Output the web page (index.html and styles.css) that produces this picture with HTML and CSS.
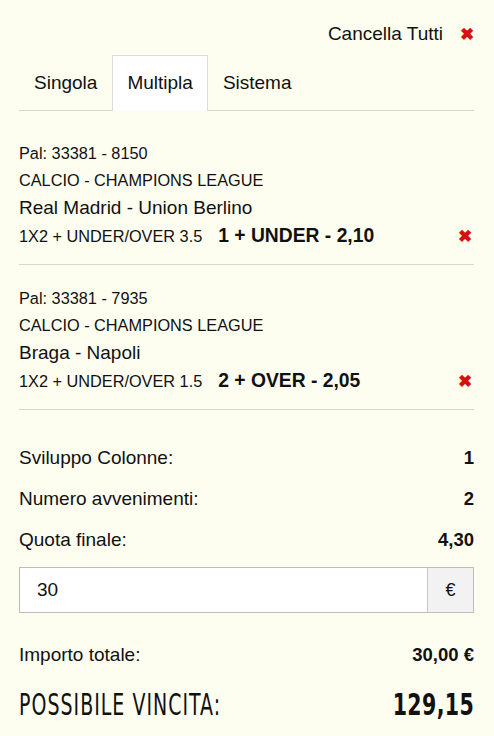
FILE: index.html
```html
<!DOCTYPE html>
<html lang="it">
<head>
    <meta charset="UTF-8">
    <meta name="viewport" content="width=device-width, initial-scale=1.0">
    <title>Schedina</title>
    <link rel="stylesheet" href="styles.css">
</head>
<body>
    <div class="coupon">
        <div class="coupon-top">
            <span class="clear-all">Cancella Tutti</span>
            <span class="remove">&#10006;</span>
        </div>

        <div class="tabs">
            <div class="tab">Singola</div>
            <div class="tab active">Multipla</div>
            <div class="tab">Sistema</div>
        </div>

        <div class="event">
            <div class="event-code">Pal: 33381 - 8150</div>
            <div class="event-league">CALCIO - CHAMPIONS LEAGUE</div>
            <div class="event-match">Real Madrid - Union Berlino</div>
            <div class="event-bet">
                <span class="bet-type">1X2 + UNDER/OVER 3.5</span>
                <span class="bet-pick">1 + UNDER - 2,10</span>
                <span class="remove">&#10006;</span>
            </div>
        </div>

        <div class="event">
            <div class="event-code">Pal: 33381 - 7935</div>
            <div class="event-league">CALCIO - CHAMPIONS LEAGUE</div>
            <div class="event-match">Braga - Napoli</div>
            <div class="event-bet">
                <span class="bet-type">1X2 + UNDER/OVER 1.5</span>
                <span class="bet-pick">2 + OVER - 2,05</span>
                <span class="remove">&#10006;</span>
            </div>
        </div>

        <div class="summary">
            <div class="summary-row">
                <span>Sviluppo Colonne:</span>
                <strong>1</strong>
            </div>
            <div class="summary-row">
                <span>Numero avvenimenti:</span>
                <strong>2</strong>
            </div>
            <div class="summary-row">
                <span>Quota finale:</span>
                <strong>4,30</strong>
            </div>

            <div class="stake">
                <input class="stake-input" type="text" value="30">
                <span class="stake-addon">€</span>
            </div>

            <div class="summary-row total">
                <span>Importo totale:</span>
                <strong>30,00 €</strong>
            </div>

            <div class="win">
                <span class="win-label">POSSIBILE VINCITA:</span>
                <strong class="win-value">129,15</strong>
            </div>
        </div>
    </div>
</body>
</html>
```

FILE: styles.css
```css
* {
    margin: 0;
    padding: 0;
    box-sizing: border-box;
}

body {
    font-family: 'Liberation Sans', Arial, sans-serif;
    background: #fdfdf0;
    color: #111;
}

.coupon {
    padding: 22px 20px 0 19px;
}

.coupon-top {
    display: flex;
    justify-content: flex-end;
    align-items: center;
    gap: 17px;
    font-size: 19px;
    height: 24px;
}

.remove {
    color: #d90f0f;
    font-size: 17px;
    font-weight: bold;
    line-height: 1;
}

.tabs {
    display: flex;
    margin-top: 9px;
    border-bottom: 1px solid #d6d6d0;
}

.tab {
    font-size: 19px;
    padding: 16px 14px 0;
    height: 56px;
    border: 1px solid transparent;
    border-bottom: none;
    margin-bottom: -1px;
}

.tab.active {
    background: #fff;
    border-color: #dcdcdc;
}

.event {
    padding: 28px 0 14px;
    border-bottom: 1px solid #d6d6d0;
}

.event + .event {
    padding-top: 19px;
}

.event-code {
    font-size: 16.3px;
    line-height: 28px;
}

.event-league {
    font-size: 16.3px;
    line-height: 27px;
}

.event-match {
    font-size: 19px;
    line-height: 28px;
}

.event-bet {
    display: flex;
    align-items: center;
    font-size: 16.3px;
    line-height: 28px;
}

.bet-pick {
    font-size: 19.3px;
    font-weight: bold;
    margin-left: 16px;
}

.event-bet .remove {
    margin-left: auto;
    margin-right: 2px;
}

.summary {
    padding-top: 27px;
}

.summary-row {
    display: flex;
    justify-content: space-between;
    align-items: center;
    font-size: 19px;
    height: 41px;
}

.summary-row strong {
    font-size: 18.5px;
}

.stake {
    display: flex;
    height: 46px;
    margin-top: 7px;
    border: 1px solid #bdbdbd;
    background: #fff;
}

.stake-input {
    flex: 1;
    min-width: 0;
    border: none;
    outline: none;
    background: transparent;
    font-family: inherit;
    font-size: 19px;
    padding-left: 17px;
    color: #111;
}

.stake-addon {
    width: 46px;
    display: flex;
    align-items: center;
    justify-content: center;
    background: #f2f2f2;
    border-left: 1px solid #c8c8c8;
    font-size: 18px;
}

.summary-row.total {
    margin-top: 21px;
}

.win {
    display: flex;
    justify-content: space-between;
    align-items: center;
    height: 36px;
    margin-top: 11px;
    font-family: 'DejaVu Sans Condensed', 'DejaVu Sans', sans-serif;
    font-stretch: condensed;
    font-size: 31px;
}

.win-label {
    letter-spacing: 1.5px;
    transform: scaleX(0.68);
    transform-origin: left center;
    white-space: nowrap;
}

.win-value {
    font-size: 30px;
    letter-spacing: 0.5px;
    transform: scaleX(0.76);
    transform-origin: right center;
}
```
